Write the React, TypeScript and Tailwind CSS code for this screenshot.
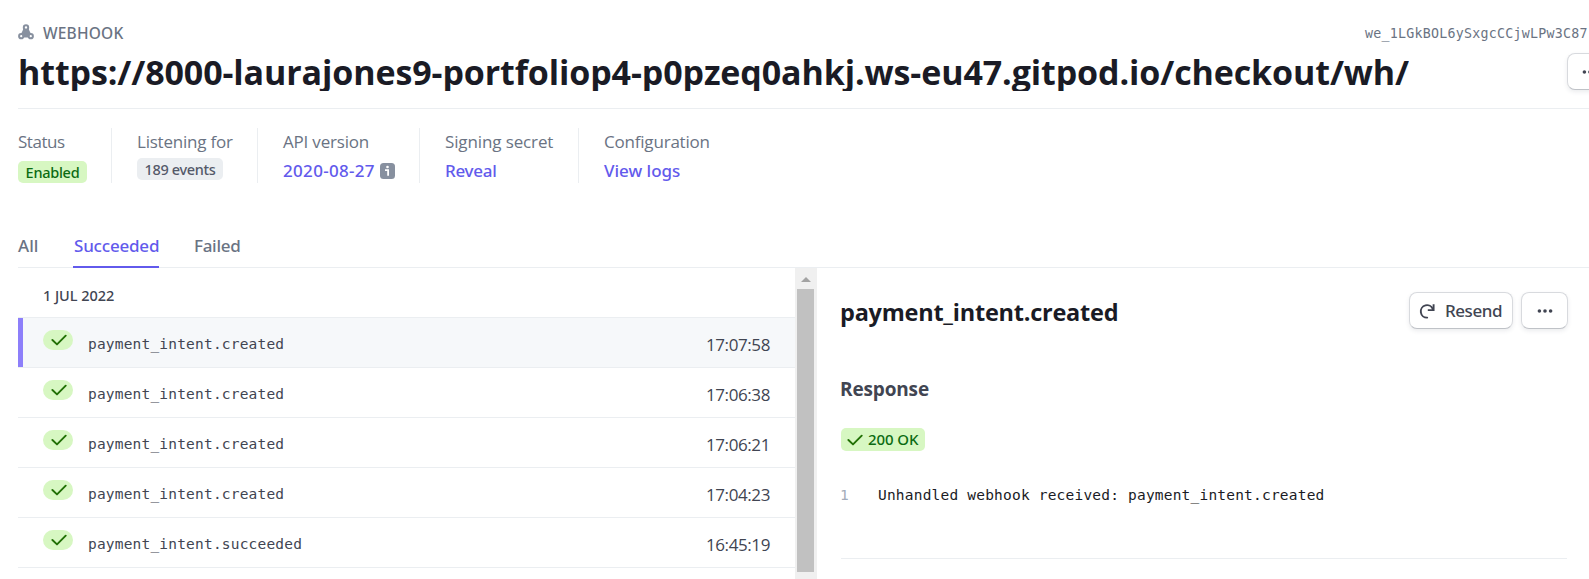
import type { ReactNode } from "react";

const EVENTS = [
  { name: "payment_intent.created", time: "17:07:58", active: true },
  { name: "payment_intent.created", time: "17:06:38", active: false },
  { name: "payment_intent.created", time: "17:06:21", active: false },
  { name: "payment_intent.created", time: "17:04:23", active: false },
  { name: "payment_intent.succeeded", time: "16:45:19", active: false },
];

const MEDIUM = "font-['Noto_Sans',sans-serif] font-medium";
const MONO = "font-['DejaVu_Sans_Mono',monospace]";

function Check({ className = "" }: { className?: string }) {
  return (
    <svg viewBox="0 0 16 12" className={`h-3 w-4 shrink-0 ${className}`} fill="none" stroke="#217005" strokeWidth="1.9" strokeLinecap="round" strokeLinejoin="round">
      <path d="M1.4 6 6 10.4 14.7 1.7" />
    </svg>
  );
}

function WebhookIcon() {
  return (
    <svg viewBox="0 0 16 16" className="h-4 w-4 shrink-0" fill="#87909f">
      <path d="M5.6 4.5h4.8l2.7 5.8-2 3.2H4.9l-2-3.2z" />
      <g fill="#fff" stroke="#87909f" strokeWidth="2">
        <circle cx="8" cy="3.4" r="2.2" />
        <circle cx="3.2" cy="12.2" r="2.1" />
        <circle cx="12.8" cy="12.2" r="2.1" />
      </g>
    </svg>
  );
}

function InfoIcon() {
  return (
    <svg viewBox="0 0 15 16" className="h-4 w-[15px] shrink-0">
      <rect width="15" height="16" rx="3.5" fill="#87909f" />
      <circle cx="7.5" cy="4" r="1.3" fill="#fff" />
      <path d="M5 7.2h3.1v5.6" fill="none" stroke="#fff" strokeWidth="1.8" />
    </svg>
  );
}

function ResendIcon() {
  return (
    <svg viewBox="0 0 16 16" className="h-4 w-4 shrink-0" fill="none" stroke="#414552" strokeWidth="1.9">
      <path d="M8.2 14.6A6.2 6.2 0 1 1 13.8 6.2" strokeLinecap="round" />
      <path d="M14.6 1.2v5.9H8.8" />
    </svg>
  );
}

function Dots() {
  return (
    <svg viewBox="0 0 16 4" className="h-1 w-4 shrink-0" fill="#414552">
      <circle cx="2.4" cy="2" r="1.8" />
      <circle cx="8" cy="2" r="1.8" />
      <circle cx="13.6" cy="2" r="1.8" />
    </svg>
  );
}

function Button({ children, className }: { children: ReactNode; className: string }) {
  return (
    <button className={`flex h-[37px] shrink-0 items-center rounded-[8px] border border-[#d8dade] border-b-[#bfc2c7] bg-white shadow-[0_2px_4px_rgba(60,66,87,0.10)] ${className}`}>
      {children}
    </button>
  );
}

function Metric({ label, labelClass, className, children }: { label: string; labelClass: string; className: string; children: ReactNode }) {
  return (
    <div className={`h-[55px] shrink-0 ${className}`}>
      <div className={`h-[26px] text-[17px] leading-[28px] text-[#6a7383] ${labelClass}`}>{label}</div>
      {children}
    </div>
  );
}

export default function App() {
  return (
    <div className="h-[579px] w-full overflow-hidden bg-white pl-[18px] font-['Open_Sans',sans-serif] whitespace-nowrap">
      <header className="h-[109px] border-b border-[#ebeef1] pt-[22px]">
        <div className="flex h-5 items-center justify-between text-[#6a7383]">
          <div className="flex items-center gap-[9px]">
            <WebhookIcon />
            <span className={`${MEDIUM} pt-px text-[15.5px] leading-5 tracking-[0.2px]`}>WEBHOOK</span>
          </div>
          <span className={`${MONO} w-[224px] pt-[3px] text-[13.3px] leading-5 tracking-[0.24px]`}>we_1LGkBOL6ySxgcCCjwLPw3C87</span>
        </div>
        <div className="mt-[11px] flex h-[38px] justify-between">
          <h1 className="h-[38px] overflow-hidden text-[34px] leading-[38px] font-bold tracking-[-0.11px] text-[#1a1b25]">
            https://8000-laurajones9-portfoliop4-p0pzeq0ahkj.ws-eu47.gitpod.io/checkout/wh/
          </h1>
          <Button className="-mr-6 w-[46px] justify-center">
            <Dots />
          </Button>
        </div>
      </header>

      <section className="mt-[19px] flex h-[55px]">
        <Metric label="Status" labelClass="tracking-[-0.48px]" className="w-[94px] border-r border-[#ebeef1]">
          <span className={`${MEDIUM} mt-[7px] flex h-[22px] w-[69px] items-center justify-center rounded-[5px] bg-[#d7f7c2] pt-px text-[14.5px] tracking-[-0.27px] text-[#0b6b12]`}>Enabled</span>
        </Metric>
        <Metric label="Listening for" labelClass="tracking-[-0.22px]" className="w-[146px] border-r border-[#ebeef1] pl-[25px]">
          <span className={`${MEDIUM} mt-1 flex h-[22px] w-[86px] items-center justify-center rounded-[5px] bg-[#ebeef1] pt-px text-[14.5px] tracking-[-0.33px] text-[#545969]`}>189 events</span>
        </Metric>
        <Metric label="API version" labelClass="tracking-[-0.2px]" className="w-[162px] border-r border-[#ebeef1] pl-[25px]">
          <div className="mt-[5px] flex h-6 items-center gap-[5px]">
            <a className={`${MEDIUM} text-[17px] leading-6 tracking-[0.32px] text-[#625aec]`}>2020-08-27</a>
            <InfoIcon />
          </div>
        </Metric>
        <Metric label="Signing secret" labelClass="tracking-[-0.12px]" className="w-[159px] border-r border-[#ebeef1] pl-[25px]">
          <a className={`${MEDIUM} mt-[5px] block h-6 text-[17px] leading-6 tracking-[-0.28px] text-[#625aec]`}>Reveal</a>
        </Metric>
        <Metric label="Configuration" labelClass="tracking-[-0.2px]" className="pl-[25px]">
          <a className={`${MEDIUM} mt-[5px] block h-6 text-[17px] leading-6 text-[#625aec]`}>View logs</a>
        </Metric>
      </section>

      <nav className={`${MEDIUM} mt-[44px] flex h-[41px] border-b border-[#ebeef1] text-[17px] text-[#6a7383]`}>
        <a className="h-[41px] w-[55px] leading-[38px]">All</a>
        <a className="h-[41px] w-[86px] border-b-2 border-[#625aec] pl-px leading-[38px] tracking-[-0.2px] text-[#625aec]">Succeeded</a>
        <a className="ml-[35px] h-[41px] leading-[38px] tracking-[-0.3px]">Failed</a>
      </nav>

      <main className="flex h-[311px]">
        <div className="w-[777px] shrink-0">
          <div className={`${MEDIUM} flex h-[50px] items-center border-b border-[#ebeef1] pt-[6px] pl-[25px] text-[14.5px] tracking-[-0.05px] text-[#414552]`}>1 JUL 2022</div>
          {EVENTS.map((event) => (
            <div
              key={event.time}
              className={`flex h-[50px] border-b border-[#ebeef1] pr-[25px] ${event.active ? "bg-[#f6f8fa]" : ""}`}
            >
              <div className={`h-full w-[5px] shrink-0 ${event.active ? "bg-[#8d7ffa]" : ""}`} />
              <div className="mt-3 ml-5 flex h-5 w-[30px] items-center justify-center rounded-full bg-[#d7f7c2]">
                <Check className="ml-px" />
              </div>
              <span className={`${MONO} ml-[15px] pt-[2px] text-[14.5px] leading-[49px] tracking-[0.19px] text-[#414552]`}>{event.name}</span>
              <span className="ml-auto pt-[2px] text-[17px] leading-[49px] tracking-[-0.4px] text-[#414552]">{event.time}</span>
            </div>
          ))}
        </div>

        <div className="flex w-[22px] shrink-0 flex-col bg-[#f0f0f0] pl-[2px]">
          <div className="flex h-[21px] w-[17px] items-start justify-center pt-[9px]">
            <svg viewBox="0 0 10 5" className="h-[5px] w-[10px]" fill="#a3a3a3">
              <path d="M5 0 10 5H0z" />
            </svg>
          </div>
          <div className="h-[283px] w-[17px] bg-[#c1c1c1]" />
        </div>

        <div className="ml-[23px] w-[728px] shrink-0 pt-6">
          <div className="flex h-[37px] items-center">
            <h2 className="pt-[3px] text-[23.5px] leading-8 font-bold tracking-[-0.24px] text-[#1a1b25]">payment_intent.created</h2>
            <Button className="ml-auto w-[104px] gap-[10px] pl-[9px]">
              <ResendIcon />
              <span className={`${MEDIUM} pt-px text-[17px] tracking-[-0.45px] text-[#414552]`}>Resend</span>
            </Button>
            <Button className="ml-2 w-[47px] justify-center">
              <Dots />
            </Button>
          </div>
          <h3 className="mt-[48px] h-6 text-[19px] leading-6 font-bold tracking-[-0.15px] text-[#414552]">Response</h3>
          <div className={`${MEDIUM} mt-[27px] ml-px flex h-[23px] w-[84px] items-center gap-1 rounded-[5px] bg-[#d7f7c2] pl-[6px] text-[15px] text-[#0b6b12]`}>
            <Check />
            <span className="pl-px tracking-[-0.1px]">200 OK</span>
          </div>
          <div className={`${MONO} mt-8 flex h-6 text-[14.5px] leading-6 tracking-[0.2px]`}>
            <span className="w-[38px] text-[#a3acb9]">1</span>
            <span className="text-[#1a1b25]">Unhandled webhook received: payment_intent.created</span>
          </div>
          <div className="mt-[51px] mr-px ml-px border-b border-[#ebeef1]" />
        </div>
      </main>
    </div>
  );
}
